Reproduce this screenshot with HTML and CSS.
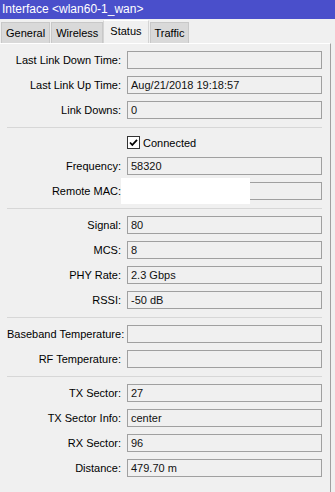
FILE: index.html
```html
<!DOCTYPE html>
<html lang="en">
<head>
    <meta charset="UTF-8">
    <meta name="viewport" content="width=device-width, initial-scale=1.0">
    <title>Interface &lt;wlan60-1_wan&gt;</title>
    <link rel="stylesheet" href="styles.css">
</head>
<body>
    <div class="titlebar">Interface &lt;wlan60-1_wan&gt;</div>

    <div class="tabs">
        <div class="tab">General</div>
        <div class="tab">Wireless</div>
        <div class="tab active">Status</div>
        <div class="tab">Traffic</div>
    </div>

    <div class="panel">
        <div class="section">
            <div class="row"><label>Last Link Down Time:</label><div class="field"></div></div>
            <div class="row"><label>Last Link Up Time:</label><div class="field">Aug/21/2018 19:18:57</div></div>
            <div class="row"><label>Link Downs:</label><div class="field">0</div></div>
        </div>

        <div class="section">
            <div class="row check-row">
                <label></label>
                <div class="check">
                    <span class="box">
                        <svg width="11" height="11" viewBox="0 0 11 11"><path d="M2 5.5 L4.3 8 L9 2.8" fill="none" stroke="#000" stroke-width="1.8"/></svg>
                    </span>
                    Connected
                </div>
            </div>
            <div class="row"><label>Frequency:</label><div class="field">58320</div></div>
            <div class="row"><label>Remote MAC:</label><div class="field"></div><div class="redact"></div></div>
        </div>

        <div class="section">
            <div class="row"><label>Signal:</label><div class="field">80</div></div>
            <div class="row"><label>MCS:</label><div class="field">8</div></div>
            <div class="row"><label>PHY Rate:</label><div class="field">2.3 Gbps</div></div>
            <div class="row"><label>RSSI:</label><div class="field">-50 dB</div></div>
        </div>

        <div class="section">
            <div class="row"><label>Baseband Temperature:</label><div class="field"></div></div>
            <div class="row"><label>RF Temperature:</label><div class="field"></div></div>
        </div>

        <div class="section">
            <div class="row"><label>TX Sector:</label><div class="field">27</div></div>
            <div class="row"><label>TX Sector Info:</label><div class="field">center</div></div>
            <div class="row"><label>RX Sector:</label><div class="field">96</div></div>
            <div class="row"><label>Distance:</label><div class="field">479.70 m</div></div>
        </div>
    </div>
</body>
</html>
```

FILE: styles.css
```css
body {
    margin: 0;
    padding: 0;
    background-color: #f0f0f0;
    font-family: "Liberation Sans", Arial, sans-serif;
    font-size: 11px;
    color: #000;
    height: 492px;
    overflow: hidden;
}
.titlebar {
    height: 19px;
    line-height: 18px;
    background-color: #4a4fcb;
    color: #ffffff;
    font-size: 12px;
    padding-left: 2px;
}
.tabs {
    display: flex;
    align-items: flex-end;
    height: 24px;
    padding-left: 1px;
}
.tab {
    height: 20px;
    line-height: 20px;
    padding: 0 4px;
    margin-right: 1px;
    background-color: #d9d9d9;
    border: 1px solid #c8c8c8;
    border-bottom: none;
    font-size: 11px;
}
.tab.active {
    height: 22px;
    line-height: 21px;
    background-color: #f0f0f0;
    border-color: #d4d4d4;
    border-top-color: #ffffff;
    padding: 0 6px;
    margin-left: -1px;
}
.panel {
    width: 330px;
    height: 448px;
    border-top: 1px solid #ffffff;
    border-right: 1px solid #a0a0a0;
}
.section {
    padding: 7px 0 8px;
    margin: 0 8px 0 7px;
    border-bottom: 1px solid #d7d7d7;
    display: flex;
    flex-direction: column;
    gap: 7px;
}
.section:last-child {
    border-bottom: none;
}
.row {
    position: relative;
    display: flex;
    align-items: center;
    height: 18px;
}
.row label {
    width: 114px;
    text-align: right;
    padding-right: 6px;
    white-space: nowrap;
}
.field {
    width: 190px;
    height: 16px;
    line-height: 16px;
    border: 1px solid #a0a0a0;
    padding-left: 3px;
    color: #111111;
}
.check-row {
    height: 15px;
}
.check {
    display: flex;
    align-items: center;
    gap: 3px;
}
.box {
    width: 11px;
    height: 11px;
    border: 1px solid #333333;
    background-color: #ffffff;
    display: flex;
}
.redact {
    position: absolute;
    left: 114px;
    top: -4px;
    width: 129px;
    height: 26px;
    background-color: #ffffff;
}
```
